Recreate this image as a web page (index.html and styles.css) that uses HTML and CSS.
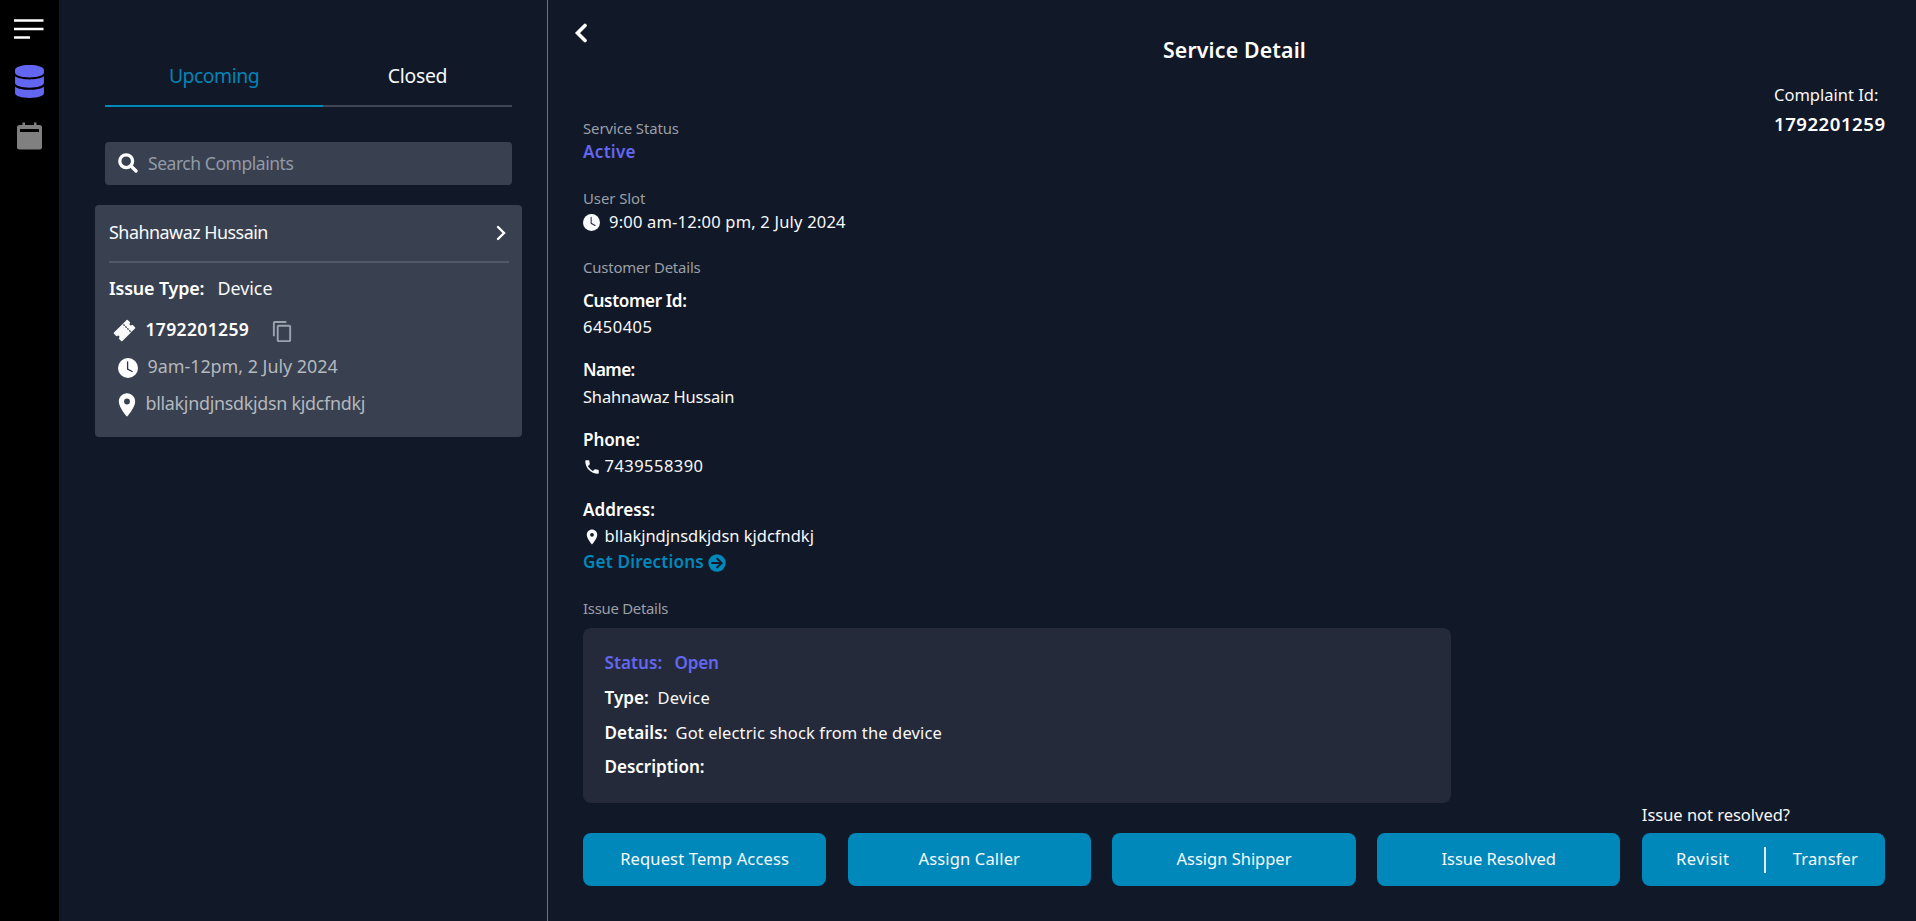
FILE: index.html
```
<!DOCTYPE html>
<html lang="en">
<head>
<meta charset="utf-8">
<title>Service Detail</title>
<link rel="stylesheet" href="styles.css">
</head>
<body>
<svg class="defs" width="0" height="0">
  <symbol id="pin" viewBox="0 0 24 24"><path d="M12 2C8.13 2 5 5.13 5 9c0 5.25 7 13 7 13s7-7.75 7-13c0-3.87-3.13-7-7-7zm0 9.5a2.5 2.5 0 0 1 0-5 2.5 2.5 0 0 1 0 5z"/></symbol>
  <symbol id="clock" viewBox="0 0 20 20"><circle cx="10" cy="10" r="10"/><path class="hands" d="M9.6 4v7l4.6 2.5"/></symbol>
</svg>
<div class="app">
  <nav class="rail">
    <svg class="menu" viewBox="0 0 30 22"><path d="M0 1.4h29.5M0 10h29.5M0 18.6h16"/></svg>
    <svg class="database" viewBox="0 0 448 512"><path d="M448 73.143v45.714C448 159.143 347.667 192 224 192S0 159.143 0 118.857V73.143C0 32.857 100.333 0 224 0s224 32.857 224 73.143zM448 176v102.857C448 319.143 347.667 352 224 352S0 319.143 0 278.857V176c48.125 33.143 136.208 48.572 224 48.572S399.874 209.143 448 176zm0 160v102.857C448 479.143 347.667 512 224 512S0 479.143 0 438.857V336c48.125 33.143 136.208 48.572 224 48.572S399.874 369.143 448 336z"/></svg>
    <svg class="calendar" viewBox="0 0 25 28"><path fill-rule="evenodd" d="M5.500.5H8V3h9V.5h2.500V3H22.500a2.500 2.500 0 0 1 2.500 2.500V25a2.500 2.500 0 0 1-2.500 2.500h-20A2.500 2.500 0 0 1 0 25V5.500A2.500 2.500 0 0 1 2.500 3h3zM3 7v3h19V7z"/></svg>
  </nav>

  <aside class="list">
    <div class="tabs">
      <div class="tab active"><span class="t-upcoming">Upcoming</span></div>
      <div class="tab"><span>Closed</span></div>
    </div>
    <div class="search">
      <svg class="lens" viewBox="0 0 20 20"><circle cx="8.200" cy="8.200" r="6.400"/><path d="M13 13l5 5"/></svg>
      <span>Search Complaints</span>
    </div>
    <div class="card">
      <div class="card-head">
        <span class="t-name">Shahnawaz Hussain</span>
        <svg class="chev" viewBox="0 0 10 16"><path d="M2 2l6 6-6 6"/></svg>
      </div>
      <div class="card-row type"><b>Issue Type:</b><span class="t-device">Device</span></div>
      <div class="card-row ticket">
        <svg viewBox="0 0 512 512"><path fill-rule="evenodd" d="M490.180 181.400l-44.130-44.130a20 20 0 0 0-27-1 30.810 30.810 0 0 1-41.680-1.600 30.810 30.810 0 0 1-1.600-41.670 20 20 0 0 0-1-27L330.600 21.820a19.910 19.910 0 0 0-28.130 0l-70.350 70.330a39.870 39.870 0 0 0-9.570 15.500 7.710 7.710 0 0 1-4.830 4.830 39.780 39.780 0 0 0-15.500 9.580l-180.400 180.400a19.910 19.910 0 0 0 0 28.130L66 374.730a20 20 0 0 0 27 1 30.690 30.690 0 0 1 43.280 43.280 20 20 0 0 0 1 27l44.130 44.130a19.910 19.910 0 0 0 28.130 0l180.400-180.400a39.820 39.820 0 0 0 9.580-15.490 7.690 7.690 0 0 1 4.840-4.840 39.840 39.840 0 0 0 15.490-9.570l70.320-70.350a19.910 19.910 0 0 0 .010-28.090z"/><path class="perf" d="M239 129l11.500 11.500M283 173l11 11M327 217l11 11M371 261l11.500 11.500"/></svg>
        <b>1792201259</b>
        <svg class="copy" viewBox="0 0 24 24"><path d="M16 1H4c-1.100 0-2 .9-2 2v14h2V3h12V1zm3 4H8c-1.100 0-2 .9-2 2v14c0 1.100.9 2 2 2h11c1.100 0 2-.9 2-2V7c0-1.100-.9-2-2-2zm0 16H8V7h11v14z"/></svg>
      </div>
      <div class="card-row slot"><svg><use href="#clock"/></svg><span>9am-12pm, 2 July 2024</span></div>
      <div class="card-row place"><svg><use href="#pin"/></svg><span>bllakjndjnsdkjdsn kjdcfndkj</span></div>
    </div>
  </aside>

  <main class="detail">
    <header class="head">
      <svg class="back" viewBox="0 0 14 20"><path d="M11 2.500L3.500 10l7.500 7.500"/></svg>
      <h1>Service Detail</h1>
    </header>
    <div class="body">
      <section class="info">
        <div class="label l-status">Service Status</div>
        <div class="strong violet s-active">Active</div>
        <div class="label l-slot">User Slot</div>
        <div class="value v-slot"><svg><use href="#clock"/></svg><span>9:00 am-12:00 pm, 2 July 2024</span></div>
        <div class="label l-customer">Customer Details</div>
        <div class="strong s-id">Customer Id:</div>
        <div class="value v-id">6450405</div>
        <div class="strong s-name">Name:</div>
        <div class="value v-name">Shahnawaz Hussain</div>
        <div class="strong s-phone">Phone:</div>
        <div class="value v-phone"><svg viewBox="0 0 24 24"><path d="M6.620 10.790c1.440 2.830 3.760 5.140 6.590 6.590l2.200-2.200c.27-.27.67-.36 1.020-.24 1.120.37 2.330.57 3.570.57.55 0 1 .45 1 1V20c0 .55-.45 1-1 1-9.390 0-17-7.610-17-17 0-.55.45-1 1-1h3.500c.55 0 1 .45 1 1 0 1.250.2 2.450.57 3.570.11.35.03.74-.25 1.020l-2.200 2.200z"/></svg><span>7439558390</span></div>
        <div class="strong s-address">Address:</div>
        <div class="value v-address"><svg><use href="#pin"/></svg><span>bllakjndjnsdkjdsn kjdcfndkj</span></div>
        <div class="strong directions"><span>Get Directions</span><svg viewBox="0 0 18 18"><circle cx="9" cy="9" r="8.700"/><path d="M4 9h9.500M9.200 4.600L13.600 9l-4.400 4.400"/></svg></div>
        <div class="label l-issue">Issue Details</div>
      </section>
      <div class="complaint"><span>Complaint Id:</span><b>1792201259</b></div>
    </div>
    <section class="issue">
      <div class="line violet"><b class="i-status">Status:</b><b class="i-open">Open</b></div>
      <div class="line"><b class="i-type">Type:</b><span class="i-device">Device</span></div>
      <div class="line"><b class="i-details">Details:</b><span class="i-text">Got electric shock from the device</span></div>
      <div class="line last"><b class="i-desc">Description:</b></div>
    </section>
    <footer class="actions">
      <div class="btn a1">Request Temp Access</div>
      <div class="btn a2">Assign Caller</div>
      <div class="btn a3">Assign Shipper</div>
      <div class="btn a4">Issue Resolved</div>
      <div class="unresolved">
        <div class="question">Issue not resolved?</div>
        <div class="btn split"><span class="revisit">Revisit</span><i></i><span class="transfer">Transfer</span></div>
      </div>
    </footer>
  </main>
</div>
</body>
</html>
```
FILE: styles.css
```
* { box-sizing: border-box; }
body {
  margin: 0;
  background: #111827;
  color: #f8f9fb;
  font: 400 16.5px/24px "Noto Sans", "Open Sans", sans-serif;
  white-space: nowrap;
  overflow: hidden;
}
b, .strong { font-weight: 600; color: #fff; }
svg { display: block; flex: none; fill: currentColor; }
.defs { position: absolute; }
.hands { fill: none; stroke: #2b3442; stroke-width: 1.3; stroke-linecap: round; }
.app { display: flex; height: 921px; }

/* icon rail */
.rail { width: 59px; background: #000; padding: 19px 0 0 14px; }
.menu { width: 30px; height: 22px; margin-top: -.5px; fill: none; stroke: #fff; stroke-width: 2.5; }
.database { width: 29px; height: 33px; margin: 24px 0 0 1px; color: #6366f1; }
.calendar { width: 25px; height: 28px; margin: 24.5px 0 0 3px; color: #808080; }

/* complaint list */
.list { width: 489px; border-right: 1px solid #6b7280; padding: 0 25px 0 36px; }
.tabs { display: flex; margin: 60px 10px 0; height: 47px; font-size: 19.4px; line-height: 32px; letter-spacing: -.27px; }
.tab { width: 189px; border-bottom: 2px solid #404653; text-align: center; }
.tab.active { width: 218px; color: #0284b8; border-color: #0087ba; }
.t-upcoming { letter-spacing: -.5px; }
.search { display: flex; align-items: center; height: 43px; margin: 35px 10px 0; padding-left: 13px; border-radius: 4px; background: #394150; color: #9299a6; font-size: 17.5px; letter-spacing: -.45px; }
.search span { margin: -2px 0 0 10px; }
.lens { align-self: flex-start; width: 20px; height: 20px; margin-top: 11px; fill: none; stroke: #fff; stroke-width: 3.3; stroke-linecap: round; }
.card { height: 232px; margin-top: 20px; padding: 0 13px 0 14px; border-radius: 4px; background: #394150; font-size: 17.9px; }
.card-head { display: flex; justify-content: space-between; height: 58px; padding: 15px 3px 0 0; border-bottom: 2px solid #50586a; }
.t-name { letter-spacing: -.5px; }
.chev { width: 10px; height: 16px; margin-top: 5px; fill: none; stroke: #fff; stroke-width: 2.4; stroke-linecap: round; }
.card-row { display: flex; align-items: center; height: 24px; }
.type { margin-top: 13px; letter-spacing: -.15px; }
.t-device { margin-left: 13px; letter-spacing: 0; }
.ticket { margin-top: 17px; padding-left: 4px; font-size: 17.5px; letter-spacing: .35px; }
.ticket svg { width: 23px; height: 23px; margin-top: 3px; }
.ticket b { margin-left: 9.5px; }
.perf { fill: none; stroke: #394150; stroke-width: 28; stroke-linecap: round; }
.ticket .copy { width: 23px; height: 23px; margin: 4px 0 0 21.5px; color: #9ca3af; }
.slot { margin-top: 13px; padding-left: 9px; letter-spacing: -.02px; color: #b4b8bf; }
.slot svg { width: 20px; height: 20px; margin-top: 4px; color: #fff; }
.slot span { margin-left: 9.5px; }
.place { margin-top: 13px; padding-left: 4px; letter-spacing: -.29px; color: #b4b8bf; }
.place svg { width: 28px; height: 28px; margin: 4px 0 0 -.5px; color: #fff; }
.place span { margin-left: 5px; }

/* service detail */
.detail { flex: 1; padding: 0 31px 0 35px; }
.head { display: flex; height: 86px; }
.back { width: 14px; height: 20px; margin: 23px 0 0 -9px; fill: none; stroke: #fff; stroke-width: 3.6; stroke-linecap: round; }
h1 { flex: 1; margin: 36px 0 0 -4px; text-align: center; color: #fff; font-size: 21.3px; line-height: 28px; font-weight: 600; letter-spacing: .15px; }
.body { display: flex; justify-content: space-between; height: 542px; }
.label { font-size: 14.9px; color: #9b9fa8; }
.strong, .issue b { font-size: 17.1px; }
.strong.violet, .violet b { color: #6366f1; }
.strong { position: relative; top: 1px; }
.l-status { margin-top: 30px; letter-spacing: -.09px; }
.s-active { margin-top: -1px; letter-spacing: .28px; }
.l-slot { margin-top: 23px; letter-spacing: -.06px; }
.value { display: flex; align-items: center; }
.v-slot { letter-spacing: .2px; }
.v-slot svg { width: 17px; height: 17px; margin: 1px 9px 0 0; }
.l-customer { margin-top: 21px; letter-spacing: -.17px; }
.s-id { margin-top: 9px; letter-spacing: -.35px; }
.v-id { margin-top: 3px; letter-spacing: .48px; }
.s-name { margin-top: 18px; letter-spacing: -.6px; }
.v-name { margin-top: 4px; letter-spacing: -.19px; }
.s-phone { margin-top: 18px; letter-spacing: -.12px; }
.v-phone { margin-top: 3px; letter-spacing: .46px; }
.v-phone svg, .v-address svg { width: 18px; height: 18px; margin: 2px 3.5px 0 0; }
.s-address { margin-top: 19px; letter-spacing: .06px; }
.v-address { margin-top: 3px; letter-spacing: -.01px; }
.directions { display: flex; align-items: center; margin-top: 1px; letter-spacing: .17px; }
.strong.directions { color: #0088bb; }
.directions svg { width: 18px; height: 18px; margin: 1px 0 0 4px; }
.directions path { fill: none; stroke: #111827; stroke-width: 2; stroke-linecap: round; }
.l-issue { margin-top: 23px; letter-spacing: -.27px; }
.complaint { display: flex; flex-direction: column; width: 111px; margin-top: -3px; letter-spacing: 0; }
.complaint b { margin-top: 5px; font-size: 18.6px; letter-spacing: .52px; }
.issue { width: 868px; height: 175px; padding: 23px 0 0 21.5px; border-radius: 8px; background: #242a39; }
.line { display: flex; height: 24px; margin-bottom: 11px; }
.line.last { margin-top: -1px; }
.i-status { width: 70px; letter-spacing: .05px; }
.i-open { letter-spacing: -.25px; }
.i-type { width: 53px; letter-spacing: .03px; }
.i-device { letter-spacing: .3px; }
.i-details { width: 71px; letter-spacing: .1px; }
.i-text { letter-spacing: .13px; }
.i-desc { letter-spacing: -.04px; }

/* action bar */
.actions { display: flex; align-items: flex-end; gap: 21.5px; height: 83px; }
.actions > * { flex: 1 1 0; min-width: 0; }
.btn { height: 53px; border-radius: 8px; background: #0088bb; line-height: 51px; text-align: center; letter-spacing: .15px; }
.a3, .a4 { letter-spacing: -.02px; }
.question { height: 24px; margin-bottom: 6px; letter-spacing: -.02px; }
.split { display: flex; align-items: center; line-height: 24px; }
.split span { margin-top: -2px; }
.split i { width: 2px; height: 26px; background: #e5e7eb; }
.revisit { width: 122px; letter-spacing: .5px; }
.transfer { flex: 1; letter-spacing: .15px; }
```
